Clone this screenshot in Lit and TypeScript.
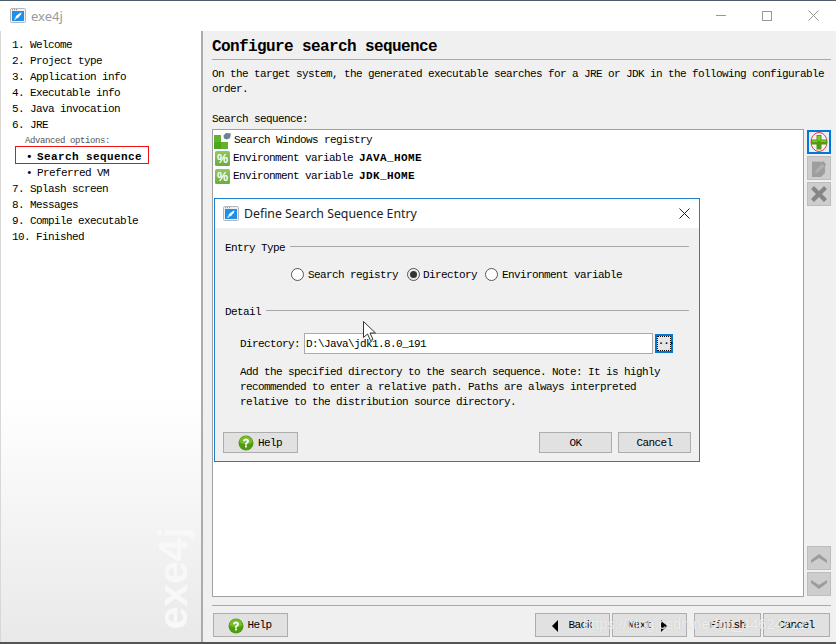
import { LitElement, html, css } from "lit";
import { customElement } from "lit/decorators.js";

const appIcon = html`<svg width="16" height="15" viewBox="0 0 16 15"><rect x=".5" y=".5" width="15" height="14" rx="1" fill="#eef1f4" stroke="#b4b8bc"/><rect x="2" y="3" width="12" height="10" fill="#1e90ea"/><path d="M2 1.700h1M4 1.700h1M6 1.700h1" stroke="#e8604c"/><path d="M5 11l1-3 4-3 1.500-.5-.5 2-3 3.500z" fill="#fff"/><path d="M5 10l-1 2 2-.5z" fill="#dfe9f2"/></svg>`;

const helpIcon = html`<svg width="16" height="16" viewBox="0 0 16 16"><circle cx="8" cy="8" r="7.500" fill="#4f9c12"/><path d="M1.500 7a6.500 6 0 0 1 13 0c-2 3-11 3-13 0z" fill="#74bb2a"/><path d="M5 6.200C5 4.500 6.400 3.600 8 3.600c1.800 0 3 1 3 2.500 0 2-2.100 2-2.100 3.600H7c0-2.500 1.900-2.500 1.900-3.500 0-.5-.3-.8-.9-.8-.7 0-1 .4-1 1z" fill="#fff"/><rect x="7" y="10.500" width="1.900" height="1.900" fill="#fff"/></svg>`;

const registryIcon = html`<svg width="17" height="17" viewBox="0 0 17 17"><rect x="0" y="3" width="7" height="7" fill="#62b32c"/><rect x="0" y="10" width="7" height="7" fill="#4ea61f"/><rect x="7" y="10" width="7" height="7" fill="#62b32c"/><path d="M9.500 3.500L12 1l5 .5-1 4.500-3 1.500-3-1z" fill="#6e8291"/></svg>`;

const percentIcon = html`<svg class="pct" width="15" height="15" viewBox="0 0 15 15"><defs><linearGradient id="pg" x1="0" y1="0" x2="0" y2="1"><stop offset="0" stop-color="#8fc766"/><stop offset="1" stop-color="#6aad3a"/></linearGradient></defs><rect width="15" height="15" rx="1.500" fill="url(#pg)"/><text x="7.500" y="12" text-anchor="middle" font-family="Liberation Sans" font-weight="700" font-size="12.500" fill="#fff" letter-spacing="0">%</text></svg>`;

const plusIcon = html`<svg width="18" height="20" viewBox="0 0 18 20"><ellipse cx="9" cy="10" rx="8" ry="9.500" fill="#f2f6f8" stroke="#ee3344"/><path d="M6.500 3h5v4.500h5.500v5h-5.500v5h-5v-5H1v-5h5.500z" fill="#559a0e"/><path d="M7.500 4h3v4.500h5.500v1.500h-5.500V8.500h-3V10H2V8.500h5.500z" fill="#86c832"/></svg>`;

const noteIcon = html`<svg width="16" height="17" viewBox="0 0 16 17"><path d="M1 1.500h12.500v1.500l1.500 1v1l-1 1v7l-4 4H1z" fill="#9e9e9e"/><path d="M3 1v1M5.500 1v1M8 1v1M10.500 1v1" stroke="#c8c8c8"/><path d="M4 14l1-4 6-6 2.500 2-6 6z" fill="#b0b0b0"/></svg>`;

const crossIcon = html`<svg width="16" height="16" viewBox="0 0 16 16"><path d="M0 3l3-3 5 5 5-5 3 3-5 5 5 5-3 3-5-5-5 5-3-3 5-5z" fill="#868686"/></svg>`;

const upIcon = html`<svg width="18" height="11" viewBox="0 0 18 11"><path d="M1 7l8-6 8 6v3l-8-5-8 5z" fill="#9c9c9c"/></svg>`;
const downIcon = html`<svg width="18" height="11" viewBox="0 0 18 11"><path d="M1 1v3l8 6 8-6V1L9 6z" fill="#9c9c9c"/></svg>`;
const closeIcon = (size: number, color: string) => html`<svg width=${size} height=${size} viewBox="0 0 11 11"><path d="M.5.500l10 10M10.500.5l-10 10" fill="none" stroke=${color}/></svg>`;

const steps1 = ["1. Welcome", "2. Project type", "3. Application info", "4. Executable info", "5. Java invocation", "6. JRE"];
const steps2 = ["7. Splash screen", "8. Messages", "9. Compile executable", "10. Finished"];

@customElement("app-root")
export class AppRoot extends LitElement {
  static styles = css`
    :host { display: block; width: 836px; height: 644px; overflow: hidden; }
    * { box-sizing: border-box; }
    .window {
      position: relative; width: 836px; height: 644px; display: flex; flex-direction: column;
      background: #fff; color: #000; border-top: 1px solid #4c5c6c; border-bottom: 2px solid #555;
      font: 11px/15px "Liberation Mono", monospace; letter-spacing: -0.6px;
    }
    .titlebar { height: 30px; flex: none; display: flex; align-items: center; padding: 0 0 1px 10px; gap: 5px; }
    .apptitle { font: 13px "Noto Sans", sans-serif; letter-spacing: 0; color: #9a9a9a; flex: 1; }
    .winctl { display: flex; align-items: center; width: 138px; flex: none; }
    .cell { width: 46px; flex: none; display: flex; justify-content: center; align-items: center; }
    .min { width: 10px; height: 1px; background: #999; }
    .max { width: 10px; height: 10px; border: 1px solid #999; }
    .content { flex: 1; display: flex; min-height: 0; }
    .side {
      width: 203px; flex: none; border-right: 2px solid #acacac; border-left: 1px solid #d8d8d8; padding: 6px 0 0 11px;
      position: relative; overflow: hidden; background: linear-gradient(#fff 0, #fff 60%, #e9e9e9 100%);
    }
    .step { height: 16px; line-height: 16px; white-space: nowrap; }
    .adv { height: 16px; line-height: 16px; padding-left: 13px; font-size: 9px; letter-spacing: -0.4px; color: #555; }
    .sub { height: 16px; line-height: 16px; display: flex; padding-left: 14px; }
    .dot { width: 11px; }
    .cur { font-weight: 700; letter-spacing: 0.4px; }
    .mark { position: absolute; left: 14px; top: 115px; width: 134px; height: 18px; border: 1px solid #f01010; }
    .logo {
      position: absolute; left: 152px; bottom: 12px; font: 700 41px/41px "Liberation Sans", sans-serif; letter-spacing: 0;
      color: #f8f8f8; writing-mode: vertical-rl; transform: rotate(180deg);
    }
    .main { flex: 1; min-width: 0; background: #f0f0f0; display: flex; flex-direction: column; padding: 0 5px 5px 9px; }
    .head { height: 29px; flex: none; border-bottom: 1px solid #a8a8a8; font-weight: 700; font-size: 16px; line-height: 29px; padding-top: 2px; }
    .desc { margin-top: 7px; white-space: pre-line; }
    .lab { margin-top: 15px; }
    .row { flex: 1; min-height: 0; display: flex; gap: 3px; margin-top: 2px; }
    .list { flex: 1; background: #fff; border: 1px solid #a0a0a0; padding: 1px 0 0 1px; }
    .li { height: 18px; display: flex; align-items: center; gap: 3px; padding-top: 1px; }
    .li svg { flex: none; }
    .li .pct { margin-left: 1px; }
    .li b { font-weight: 700; letter-spacing: 0.4px; }
    .tools { width: 24px; flex: none; display: flex; flex-direction: column; gap: 2px; padding-top: 1px; padding-bottom: 1px; }
    .tool { width: 24px; height: 24px; display: flex; align-items: center; justify-content: center; background: #cdcdcd; border: 1px solid #bdbdbd; }
    .tool.on { background: #e6f0f8; border: 2px solid #0078d7; }
    .space { flex: 1; }
    .rule { flex: none; height: 1px; background: #a8a8a8; margin-top: 8px; }
    .foot { flex: none; display: flex; margin-top: 7px; height: 24px; }
    .btn { display: flex; align-items: center; justify-content: center; gap: 6px; background: #e1e1e1; border: 1px solid #adadad; padding-top: 1px; }
    .help { width: 75px; margin-left: 1px; gap: 3px; padding-right: 1px; }
    .back, .next { width: 75px; }
    .back { margin-left: 247px; }
    .next { margin-left: 2px; padding-right: 5px; }
    .finish { width: 67px; margin-left: 7px; }
    .cancel { width: 67px; margin-left: 2px; }
    .tri { width: 0; height: 0; border-top: 6px solid transparent; border-bottom: 6px solid transparent; }
    .tl { border-right: 6px solid #000; margin-right: 4px; }
    .tr { border-left: 6px solid #000; margin-left: 3px; }
    .dialog {
      position: absolute; left: 214px; top: 197px; width: 486px; height: 264px; background: #f0f0f0;
      border: 1px solid #1f7fcb; display: flex; flex-direction: column;
    }
    .dtitle { height: 29px; flex: none; background: #fff; display: flex; align-items: center; padding: 0 9px 0 8px; gap: 5px; }
    .dname { flex: 1; font: 12.300px "Noto Sans", sans-serif; letter-spacing: 0; color: #222; }
    .dbody { flex: 1; padding: 11px 10px 8px; display: flex; flex-direction: column; }
    .sect { height: 16px; line-height: 16px; display: flex; align-items: center; gap: 5px; }
    .sect span { padding-top: 1px; }
    .sect i { flex: 1; height: 1px; background: #a8a8a8; margin-top: -2px; }
    .radios { height: 16px; line-height: 16px; margin-top: 11px; margin-bottom: 21px; padding-left: 66px; display: flex; align-items: center; }
    .radio { width: 13px; height: 13px; border-radius: 50%; border: 1px solid #555; background: #fff; margin-right: 4px; flex: none; display: flex; align-items: center; justify-content: center; }
    .radio.sel { background: #ececec; margin-right: 3px; }
    .radio.sel::after { content: ""; width: 7px; height: 7px; border-radius: 50%; background: #333; }
    .radios span { margin-right: 9px; padding-top: 1px; }
    .radios span.dir { margin-right: 8px; }
    .dirrow { display: flex; align-items: center; margin-top: 14px; height: 21px; padding-left: 15px; }
    .dirrow span { padding-top: 2px; }
    .input { width: 349px; height: 21px; margin-left: 4px; background: #fff; border: 1px solid #ababab; padding-left: 1px; line-height: 20px; }
    .more { width: 18px; height: 19px; margin-left: 2px; border: 2px solid #0078d7; background: #e6e6e6; }
    .more div { height: 100%; border: 1px dotted #000; text-align: center; line-height: 9px; font-size: 10px; font-weight: 700; }
    .note { margin-top: 11px; padding-left: 15px; white-space: pre-line; }
    .dfoot { display: flex; margin-top: auto; height: 21px; }
    .dhelp { width: 75px; margin-left: -2px; gap: 4px; padding-right: 1px; }
    .ok { width: 73px; margin-left: auto; }
    .dcancel { width: 73px; margin-left: 6px; margin-right: -2px; }
    .cursor { position: absolute; left: 363px; top: 320px; }
    .wm {
      position: absolute; left: 583px; top: 613px; font: 14.600px/20px "Liberation Sans", sans-serif; letter-spacing: 0;
      white-space: nowrap; color: rgba(255,255,255,.72); text-shadow: 0 0 1px rgba(170,170,170,.6);
    }
  `;

  render() {
    return html`<div class="window">
      <div class="titlebar">
        ${appIcon}
        <div class="apptitle">exe4j</div>
        <div class="winctl">
          <div class="cell"><div class="min"></div></div>
          <div class="cell"><div class="max"></div></div>
          <div class="cell">${closeIcon(11, "#999")}</div>
        </div>
      </div>
      <div class="content">
        <div class="side">
          ${steps1.map((s) => html`<div class="step">${s}</div>`)}
          <div class="adv">Advanced options:</div>
          <div class="sub cur"><span class="dot">•</span><span>Search sequence</span></div>
          <div class="sub"><span class="dot">•</span><span>Preferred VM</span></div>
          ${steps2.map((s) => html`<div class="step">${s}</div>`)}
          <div class="mark"></div>
          <div class="logo">exe4j</div>
        </div>
        <div class="main">
          <div class="head">Configure search sequence</div>
          <div class="desc">On the target system, the generated executable searches for a JRE or JDK in the following configurable
order.</div>
          <div class="lab">Search sequence:</div>
          <div class="row">
            <div class="list">
              <div class="li">${registryIcon}<span>Search Windows registry</span></div>
              <div class="li">${percentIcon}<span>Environment variable <b>JAVA_HOME</b></span></div>
              <div class="li">${percentIcon}<span>Environment variable <b>JDK_HOME</b></span></div>
            </div>
            <div class="tools">
              <div class="tool on">${plusIcon}</div>
              <div class="tool">${noteIcon}</div>
              <div class="tool">${crossIcon}</div>
              <div class="space"></div>
              <div class="tool">${upIcon}</div>
              <div class="tool">${downIcon}</div>
            </div>
          </div>
          <div class="rule"></div>
          <div class="foot">
            <div class="btn help">${helpIcon}<span>Help</span></div>
            <div class="btn back"><span class="tri tl"></span><span>Back</span></div>
            <div class="btn next"><span>Next</span><span class="tri tr"></span></div>
            <div class="btn finish">Finish</div>
            <div class="btn cancel">Cancel</div>
          </div>
        </div>
      </div>

      <div class="dialog">
        <div class="dtitle">
          ${appIcon}
          <div class="dname">Define Search Sequence Entry</div>
          ${closeIcon(11, "#222")}
        </div>
        <div class="dbody">
          <div class="sect"><span>Entry Type</span><i></i></div>
          <div class="radios">
            <div class="radio"></div><span>Search registry</span>
            <div class="radio sel"></div><span class="dir">Directory</span>
            <div class="radio"></div><span>Environment variable</span>
          </div>
          <div class="sect"><span>Detail</span><i></i></div>
          <div class="dirrow"><span>Directory:</span><div class="input">D:\\Java\\jdk1.8.0_191</div><div class="more"><div>...</div></div></div>
          <div class="note">Add the specified directory to the search sequence. Note: It is highly
recommended to enter a relative path. Paths are always interpreted
relative to the distribution source directory.</div>
          <div class="dfoot">
            <div class="btn dhelp">${helpIcon}<span>Help</span></div>
            <div class="btn ok">OK</div>
            <div class="btn dcancel">Cancel</div>
          </div>
        </div>
      </div>

      <svg class="cursor" width="14" height="21" viewBox="0 0 14 21"><path d="M.5.500v16l4-3.500 3 6.500 2.500-1-3-6.500h5.500z" fill="#fff" stroke="#333"/></svg>
      <div class="wm">https://blog.csdn.net/qq_44624722</div>
    </div>`;
  }
}
